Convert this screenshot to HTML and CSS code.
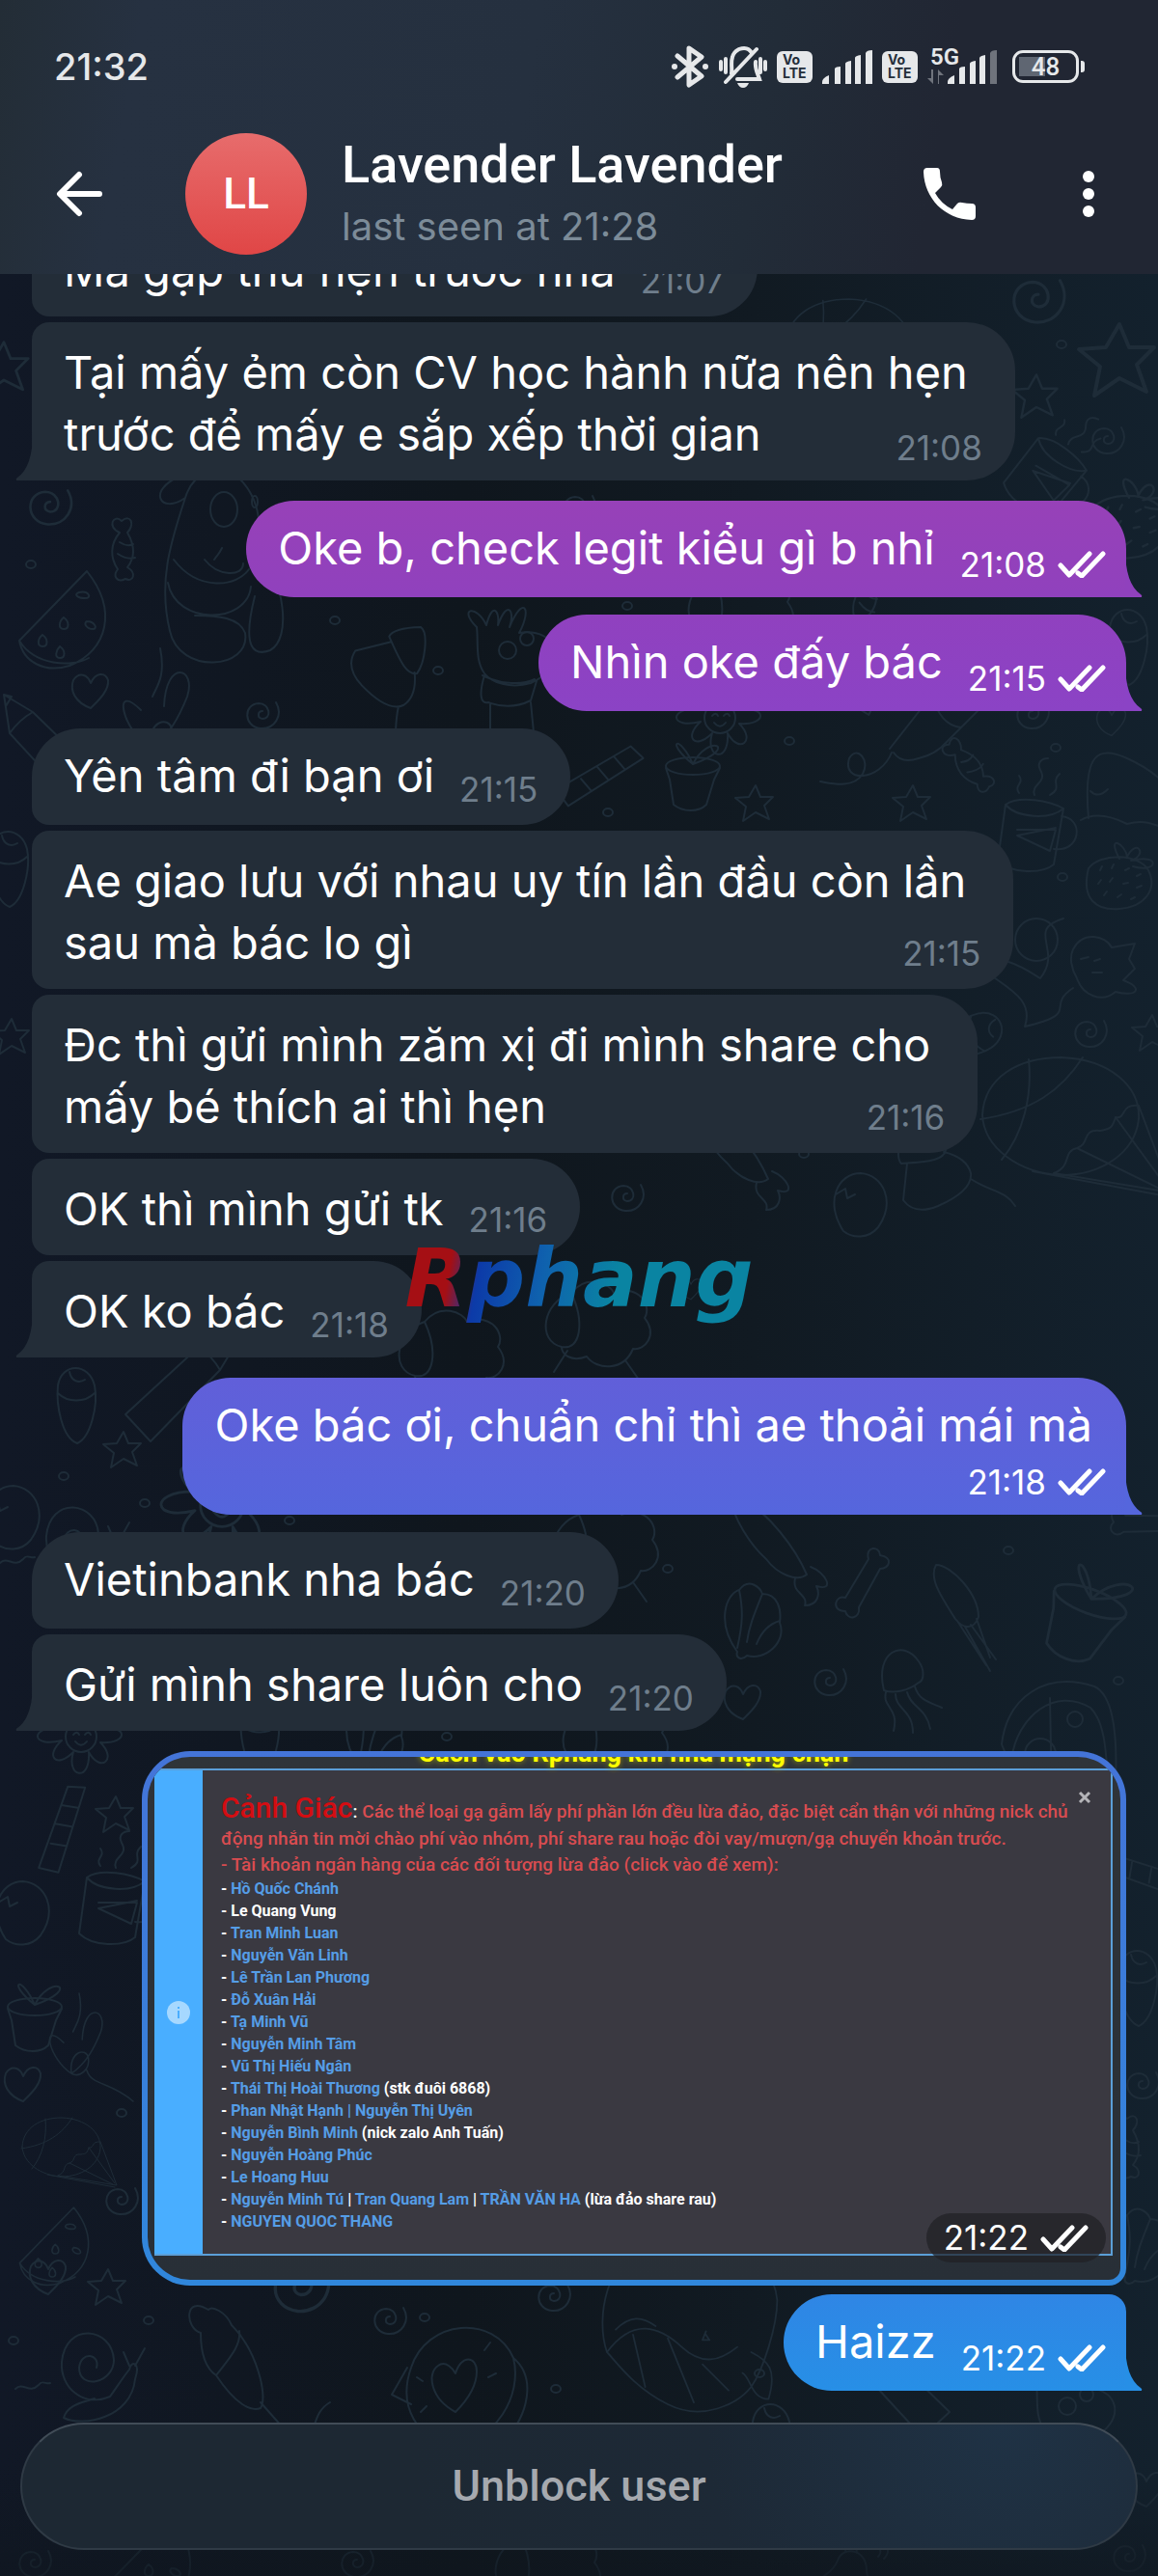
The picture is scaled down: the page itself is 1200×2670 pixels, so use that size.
FILE: index.html
```html
<!DOCTYPE html>
<html lang="vi">
<head>
    <meta charset="UTF-8">
    <meta name="viewport" content="width=device-width, initial-scale=1.0">
    <link rel="stylesheet" href="styles.css">
    <title>Lavender Lavender</title>
</head>
<body>

<!-- shared icons and wallpaper doodles -->
<svg class="defs" aria-hidden="true">
    <symbol id="checks" viewBox="0 0 50 28">
        <path d="M3 15l9 10L33 3M21 23l4 3L47 3" fill="none" stroke="currentColor" stroke-width="5" stroke-linecap="round" stroke-linejoin="round"/>
    </symbol>
    <symbol id="tail" viewBox="0 0 18 50">
        <path d="M0 0V50H17Q18 48 16 47Q0 36 0 0Z" fill="currentColor"/>
    </symbol>
    <g id="star"><path d="M0-18l5 12 13 0-9 9 5 14-14-7-13 9 3-15-11-9 14-1z"/></g>
    <g id="heart"><path d="M0 18C-16 12-22 0-18-11C-12-20-3-17 0-8C5-19 15-20 18-11C19 0 8 10 0 18z"/></g>
    <g id="swirl"><path d="M14-12C22 2 12 16-2 15C-20 13-20-10-4-11C8-11 10 5 0 5C-6 4-5-3 0-3"/></g>
    <g id="dot"><ellipse rx="5" ry="4"/></g>
    <g id="melon"><path d="M-42 32L28-40C60 0 50 42 10 58C-16 66-38 54-42 32C-26 58 12 60 30 50M-18 26c6 4 6 12 0 12s-5-8 0-12M4 8c6 4 6 12 0 12s-5-8 0-12M20-18c10-2 14 6 6 6s-12-4-6-6M28 12c8 0 12 8 6 8s-10-6-6-8M0 38c6 4 6 12 0 12s-4-8 0-12"/></g>
    <g id="candy"><path d="M-8-22c-14-6-6-20 2-12c10-8 14 4 6 12c8 14 8 26 0 36c10 6 6 16-2 12c-8 4-14-2-8-10c-8-12-8-26 2-38zM-8-12c6 4 10 4 14 2M-10 0c6 4 12 6 18 4"/></g>
    <g id="bear"><path d="M-34-88C-50-40-62 0-50 50C-40 96 34 90 28 52C22 36 0 34-24 34M-46-24C-20 10 20 4 32-14M-52 0C-44 44 30 44 34 4M38 14C24 70 38 76 54 70C76 58 70 0 40-40C46-60 42-90 20-110C0-126-26-114-34-88C-60-70-74-96-40-110M-14-24C0-6 26-6 26-20M4-36C0-28 0-30-4-24"/><ellipse cx="6" cy="-76" rx="14" ry="18"/><ellipse cx="38" cy="-84" rx="3" ry="6"/></g>
    <g id="llama"><path d="M-36-40c-20-20 0-24 10-2c6-24 14-16 12 0c10-28 18-14 12 2c14-34 24-20 10 6C50-40 60 0 20 18c-20 6-40 0-48-10c-10-14-6-32-8-48M-28 10c-6 20-4 30 4 28c16 6 32 4 44-2l6-20M-22 40v60M20 38l6 62M-30 10c20 10 42 10 54 4"/><circle cx="-4" cy="-16" r="9"/><circle cx="16" cy="-28" r="7"/></g>
    <g id="flower"><circle r="16"/><path d="M-8-2c2-3 5-3 6 0M4-2c2-3 5-3 6 0M-6 5c4 5 8 5 12 0M-10-14c-10-30 18-30 14-2c14-26 30-10 12 8c34-6 34 16 4 14c18 18 0 32-12 10c2 32-24 26-16 0c-18 18-30 4-12-12c-32 8-34-14-2-14c-18-18-4-28 12-4"/></g>
    <g id="pot"><ellipse cx="0" cy="0" rx="28" ry="9"/><path d="M-28 2l4 12 4 26c10 8 26 8 34 0l8-26 6-12M0-2C-14-34-30-26 0-2C16-34 50-20 0-2z"/></g>
    <g id="rocket"><path d="M-70 30L-26-26L34-78L62-50L4 8L-10 22Q-22 36-40 40Q-58 46-66 34M-26-26Q-18 6 4 8M-2-46Q6-14 24-10M16-62Q26-34 46-32M-68 34C-80 64-120 66-112 40C-104 26-90 42-98 56C-108 72-130 66-142 64"/></g>
    <g id="cup"><path d="M-30-24l-8 58c14 14 46 14 58 4l10-58M28-12c24 2 20 38-8 34M30-20c-14 12-48 10-60-4c14-10 46-4 60 4M-18 2l40 0-6 22-34-16 40-8M-16-36c-6-8 6-10 0-18M0-34c-4-12 14-12 6-26c-4-8 2-12 8-12M16-34c14-8 0-12 10-22"/></g>
    <g id="ghost"><path d="M-40 28C-46-40-30-48 0-34C40-16 70 20 60 42C40 46 30 26 0 34C-16 26-34 22-48 30M-38 0c6 6 12 4 18-2"/></g>
    <g id="berry"><path d="M-32-10C-20-26 20-26 30-8C40 12 26 30 0 32C-24 34-40 22-32-10M0-20C-14-46 6-36 8-22C18-42 30-24 12-18C44-26 40-4 14-12M-20-8l2-4M-8-10l2-4M6-8l4-2M18-2l4-2M-22 6l3-4M-10 4l3-4M4 6l5-1M18 10l5-2M-16 18l3-4M-2 20l4-3M12 22l4-2"/></g>
    <g id="cat"><path d="M-30-20C-20-40 4-34 10-22L34-26L28-10L34 0L22 12C44 20 36 30 14 24C0 36-20 28-26 10C-32 0-34-12-30-20M-22-10l8-2M-8-8l6-2M-10 4l10 0M-30 20C-60 40-20 46-80 60C-70 30-100 20-124 0C-110-20-80 0-64 10C-40-20-80-40-40-52"/><circle cx="-68" cy="-30" r="22"/></g>
    <g id="firework"><path d="M-30-12L40-2Q50 8 40 16L-32 6M-32-4C-50 6-66 4-64-10C-68-20-76-14-80-12M-86-10l-6-4M-86-18l-4-6M-78-20l0-6"/><ellipse cx="-32" cy="-3" rx="7" ry="10"/></g>
    <g id="bell"><path d="M-34 18C-32 4-18 6-12-10C-6-26 18-22 18 0C18 10 26 14 22 26C18 34-30 28-34 18zM-34 18C-26 10 16 16 22 24M-4-20c2-8 12-6 12 2M-44 22c-4-4-2-8 0-10M30-14c4-4 2-8 0-10M36-12c6-6 4-10 2-14"/><circle cx="-16" cy="22" r="6"/></g>
    <g id="balloon"><path d="M-82 10C-80-30-44-50 0-50C50-48 82-20 80 14C76 50 40 72 0 72C-44 70-80 44-82 10zM-84 14C-30 6 0-16 22-50M-34-48C-30-10-40 30-62 56M80 0C60-2 68 14 56 12C52 26 48 24 40 26C20 24 30 40 16 44C0 48 12 62-8 70M80 0L114 90L-8 70M56 12L110 86M16 44L106 88M-30 68L110 94"/></g>
    <g id="tree"><path d="M-16-44C-8-50 20-36 28-24C26-14 14-12-18-10C-24-16-20-32-16-44zM-12-10L-16 28Q-4 44 20 34Q56 18 54 0Q50-16 26-22M54 6C76 20 90 18 100 34"/></g>
    <g id="egg"><path d="M-14 30C-34 0-20-30 4-30C28-28 40 0 22 26C12 38-4 38-14 30M-22-8l10-6 2 10 8-4"/></g>
    <g id="brush"><path d="M-42-44c-8-18 4-22 12-2C-4-32 24 4 36 32C26 40 6 32-6 16C-24 0-40-28-42-44zM24 36c-4 16 14 16 10 28c14 0 16-12 12-20c20 6 10-14-6-20"/></g>
    <g id="sheep"><path d="M-20-30C-50-20-56 20-30 26C-10 30-6 0-20-30C-4-50 20-40 24-30C50-40 64-16 56-4C70 14 56 30 44 28C34 52 6 50-4 36C-20 42-30 34-30 26M-24 30l-14 22M36 40l14 20"/></g>
    <g id="rocketcandle"><path d="M-10-50l16-8 20 90-20 6zM-6-30l16-6M-2-10l16-6M4 10l16-6"/></g>
    <g id="bone"><path d="M-20 30c-16 0-10-18 0-14l24-40c-4-14 12-14 12-4c14 2 10 14 0 14l-22 40c2 12-12 14-14 4z"/></g>
    <g id="shell"><path d="M-18 30C-40 0-30-30-16-34C-6-48 6-36 8-30C24-30 28-14 26 0C34 20 10 40-8 34C-14 40-20 36-18 30zM-16-34c4 20 4 34-2 60M8-30c-8 20-14 34-16 50M26-2c-14 4-20 14-24 24"/></g>
    <g id="squid"><path d="M-30-50C-14-50 14-20 14 4C8 20-4 14-10 6C-24-16-38-36-30-50zM-8 8l30 46M0 14l26 46M6 12l26 36M12 6l14 40"/></g>
    <g id="jelly"><path d="M-20 10C-30-30 0-44 16-20C22-12 22 0 16 2C6 10-10 14-20 10zM-18 12c-4 16 14 16 8 40M-8 14c0 16 18 16 18 40M4 12c4 16 20 16 24 38M12 6c4 14 14 16 28 22"/></g>
    <g id="pizza"><path d="M-56 30C-50-20-10-46 40-30C62-20 66 30 60 100M-56 30C-52 40-50 44-46 46C-40 0 0-30 36-8C54 10 52 50 56 90M-46 46L44 60M-6-18L-4 80"/><circle cx="-16" cy="40" r="16"/><circle cx="20" cy="4" r="8"/></g>
    <g id="snail"><path d="M-40 50C-20 60 30 50 34 10C40-8 30-10 28 0C20 10 14 20 8 28C-20 40-44 18-42-8C-38-50 10-44 12-10C12 14-24 22-24-2C-22-20-2-16-6-2M34-4l10-18M28-4l-6-14M-40 50C-36 36-20 34-8 30M-90 20c8-8 14 6 24-4c4-6 8 0 12-2"/></g>
    <g id="cone"><path d="M-20-56c-26-16-24 20-8 24c0 30 10 40 16 44c20 30 36 38 46 34c8-12-4-60-30-86c-6-14-20-20-24-16M-12 12C0-4 14-18 12-34M34 40l44 50c14-20 10-40 28-50"/></g>
    <g id="donut"><path d="M-46-10C-30-60 40-66 60-20C70 20 40 66 0 70C-40 66-60 30-46-10zM60-20C84 0 76 40 50 66M-50-10l-16 28 20 10M0 36C-26 22-30-4-18-12C-10-18-2-8 0-4C6-24 22-22 22-6C22 10 10 26 0 36zM30-28l6-8M34 0l8-4M-34 4l-6-4M-30 30l-6 6"/></g>
    <g id="whale"><path d="M-90 20C-104-20-90-90-40-110C30-126 100-100 106-40C106-10 90 40 76 60C60 80 20 100-20 80C-60 60-80 30-90 20C-60-20-30-10-4 14C20 36 40 30 60 14M-60 0l14 60M-20 4l30 74M20 34l30 30M-80-6c16-16 30-16 46-4M24 0l4 6-8 0 4-10M76 20c20 10 30 20 20 54c-20 0-20-24-30-30"/></g>
    <g id="nut"><path d="M-20-20C-16-44 12-44 18-20C22 0 14 34 0 40C-16 34-22 0-20-20zM-20-12c10 10 28 10 38 0M-8-34c2 10 10 12 16 8"/></g>
    <g id="pencil"><path d="M-50-50l6 40 70 76 28-26-74-72zM-44-10q10-14 24-22M-50-50l8 2-6 10z"/></g>
    <g id="bird"><path d="M-30-16c-30-30-20 20 10 40C0 10 10-10 18-30C28-60-4-70-6-20M-20 24c-4-30 20-34 22-20c2 14-10 26-22 20zM0 20c6 20 30 14 60 40M-10-80c6 30-4 40-8 50"/></g>
</svg>

<header class="topbar">
    <div class="status">
        <span class="clock">21:32</span>
        <div class="status-icons">
            <svg width="40" height="44" viewBox="0 0 40 44" fill="none" stroke="currentColor" stroke-width="5" stroke-linejoin="round" stroke-linecap="round">
                <path d="M7 11L32 32L19 41V3L32 12L7 33"/>
                <circle cx="4" cy="22" r="3" fill="currentColor" stroke="none"/><circle cx="36" cy="22" r="3" fill="currentColor" stroke="none"/>
            </svg>
            <svg width="50" height="44" viewBox="0 0 50 44" fill="none" stroke="currentColor" stroke-width="4" stroke-linecap="round">
                <path d="M13 29C14 24 12 18 14 12C17 2 30 0 34 8M38 17C37 24 40 29 42 35H19M39 4L7 38M7 14V28M2 17V25M43 14V28M48 17V25"/>
                <path d="M19 39H31Q29 44 25 44Q21 44 19 39Z" fill="currentColor" stroke="none"/>
            </svg>
            <span class="volte">Vo<br>LTE</span>
            <svg width="52" height="36" viewBox="0 0 52 36" fill="currentColor">
                <path d="M0 34Q0 30 7 27V36H0zM13 20Q14 18 19 18V36H13zM24 15Q24 13 30 12V36H24zM34 9Q34 7 40 6V36H34zM45 4Q46 1 52 1V36H45z"/>
            </svg>
            <span class="volte">Vo<br>LTE</span>
            <span class="net">
                <b>5G</b>
                <svg width="72" height="36" viewBox="0 0 72 36" fill="currentColor">
                    <path opacity=".4" d="M4 21v9H0l6 6V21zM12 36v-9h5l-6-6v15zM65 4Q66 1 72 1V36H65z"/>
                    <path d="M21 34Q21 30 28 27V36H21zM33 20Q34 18 39 18V36H33zM44 15Q44 13 50 12V36H44zM54 9Q54 7 60 6V36H54z"/>
                </svg>
            </span>
            <span class="battery">48</span>
        </div>
    </div>
    <div class="contact">
        <button class="icon-btn back" aria-label="Back">
            <svg width="50" height="50" viewBox="0 0 50 50" fill="none" stroke="currentColor" stroke-width="6" stroke-linecap="round" stroke-linejoin="round">
                <path d="M45 25H5M24 5L4 25L24 45"/>
            </svg>
        </button>
        <div class="avatar">LL</div>
        <div class="who">
            <h1>Lavender Lavender</h1>
            <p>last seen at 21:28</p>
        </div>
        <button class="icon-btn call" aria-label="Call">
            <svg width="54" height="54" viewBox="0 0 54 54" fill="currentColor">
                <path d="M4 0H14Q17 0 17 4Q17 10 19 15Q20 18 18 20L12 26Q18 37 30 43L35 37Q37 35 40 36Q45 37 50 37Q54 37 54 41V50Q54 54 50 54C22 53 1 32 0 4Q0 0 4 0Z"/>
            </svg>
        </button>
        <button class="icon-btn" aria-label="More">
            <svg width="12" height="54" viewBox="0 0 12 54" fill="currentColor">
                <circle cx="6" cy="9" r="6"/><circle cx="6" cy="27" r="6"/><circle cx="6" cy="45" r="6"/>
            </svg>
        </button>
    </div>
</header>

<svg class="doodles" viewBox="0 0 1200 2670" preserveAspectRatio="xMidYMin slice" aria-hidden="true">
    <use href="#balloon" transform="translate(880 350) scale(.8)"/>
    <use href="#swirl" transform="translate(1076 310) scale(1.600)"/>
    <use href="#star" transform="translate(1160 372) scale(2)"/>
    <use href="#star" transform="translate(1074 410) scale(1.200)"/>
    <use href="#star" transform="translate(4 380) scale(1.400)"/>
    <use href="#dot" x="1100" y="357"/>
    <use href="#swirl" x="1148" y="455"/>
    <use href="#cup" transform="translate(1090 490) rotate(30)"/>
    <use href="#berry" transform="translate(1170 540) scale(1.200)"/>
    <use href="#candy" transform="translate(132 574)"/>
    <use href="#dot" x="32" y="585"/>
    <use href="#swirl" transform="translate(52 524) scale(1.300)"/>
    <use href="#melon" x="62" y="632"/>
    <use href="#bear" x="226" y="604"/>
    <use href="#heart" x="94" y="716"/>
    <use href="#swirl" x="272" y="740"/>
    <use href="#dot" x="347" y="643"/>
    <use href="#dot" x="454" y="695"/>
    <use href="#tree" transform="translate(400 680) rotate(70)"/>
    <use href="#llama" x="530" y="690"/>
    <use href="#bird" x="176" y="752"/>
    <use href="#pencil" transform="translate(54 770)"/>
    <use href="#sheep" transform="translate(760 628)"/>
    <use href="#dot" x="650" y="628"/>
    <use href="#candy" transform="translate(900 628) rotate(20)"/>
    <use href="#swirl" x="600" y="526"/>
    <use href="#nut" transform="translate(1170 670)"/>
    <use href="#flower" x="746" y="744"/>
    <use href="#pot" transform="translate(718 794)"/>
    <use href="#rocketcandle" transform="translate(610 800) rotate(70)"/>
    <use href="#rocketcandle" transform="translate(868 720) rotate(-48)"/>
    <use href="#rocket" x="992" y="746"/>
    <use href="#swirl" x="1070" y="740"/>
    <use href="#heart" transform="translate(1152 748) scale(.8)"/>
    <use href="#candy" transform="translate(1010 794) rotate(-40)"/>
    <use href="#dot" x="818" y="768"/>
    <use href="#dot" x="1094" y="775"/>
    <use href="#dot" x="630" y="842"/>
    <use href="#star" x="783" y="832"/>
    <use href="#star" x="946" y="832"/>
    <use href="#ghost" x="1168" y="820"/>
    <use href="#cup" x="1072" y="858"/>
    <use href="#dot" x="1101" y="909"/>
    <use href="#berry" x="1160" y="910"/>
    <use href="#cat" x="1142" y="1004"/>
    <use href="#nut" transform="translate(10 900)"/>
    <use href="#star" x="12" y="1074"/>
    <use href="#nut" transform="translate(1002 1076) rotate(70)"/>
    <use href="#swirl" x="1130" y="1070"/>
    <use href="#star" x="1194" y="1070"/>
    <use href="#star" x="904" y="1092"/>
    <use href="#firework" x="810" y="1108"/>
    <use href="#swirl" x="650" y="1240"/>
    <use href="#dot" x="960" y="1118"/>
    <use href="#swirl" x="790" y="1150"/>
    <use href="#bell" x="886" y="1152"/>
    <use href="#dot" x="987" y="1153"/>
    <use href="#balloon" x="1100" y="1146"/>
    <use href="#tree" x="952" y="1216"/>
    <use href="#dot" x="833" y="1196"/>
    <use href="#egg" x="888" y="1246"/>
    <use href="#brush" x="760" y="1190"/>
    <use href="#sheep" x="612" y="1370"/>
    <use href="#heart" transform="translate(716 1336) scale(.6)"/>
    <use href="#sheep" transform="translate(460 1400)"/>
    <use href="#nut" x="80" y="1456"/>
    <use href="#pencil" transform="translate(196 1440) rotate(90)"/>
    <use href="#star" x="128" y="1502"/>
    <use href="#dot" x="66" y="1530"/>
    <use href="#dot" x="150" y="1558"/>
    <use href="#egg" transform="translate(10 1570)"/>
    <use href="#snail" transform="translate(90 1600)"/>
    <use href="#flower" transform="translate(230 1560) scale(1.400)"/>
    <use href="#dot" x="300" y="1576"/>
    <use href="#sheep" transform="translate(620 1600)"/>
    <use href="#brush" x="800" y="1600"/>
    <use href="#whale" transform="translate(900 1500) scale(.6)"/>
    <use href="#bone" transform="translate(896 1640)"/>
    <use href="#bone" transform="translate(1190 1580) rotate(60)"/>
    <use href="#dot" x="692" y="1626"/>
    <use href="#dot" x="1045" y="1607"/>
    <use href="#shell" x="782" y="1682"/>
    <use href="#squid" x="1000" y="1672"/>
    <use href="#pot" transform="translate(1130 1660) rotate(20) scale(1.400)"/>
    <use href="#swirl" x="860" y="1742"/>
    <use href="#heart" x="770" y="1764"/>
    <use href="#jelly" x="936" y="1742"/>
    <use href="#dot" x="1159" y="1742"/>
    <use href="#pizza" x="1094" y="1778"/>
    <use href="#flower" x="84" y="1800"/>
    <use href="#nut" x="270" y="1800"/>
    <use href="#shell" transform="translate(390 1800)"/>
    <use href="#sheep" transform="translate(630 1800)"/>
    <use href="#dot" x="463" y="1800"/>
    <use href="#rocketcandle" transform="translate(54 1900) rotate(30)"/>
    <use href="#star" x="120" y="1880"/>
    <use href="#cup" transform="translate(120 1970)"/>
    <use href="#egg" x="20" y="1980"/>
    <use href="#pot" transform="translate(36 2080)"/>
    <use href="#bird" transform="translate(90 2130) scale(.8)"/>
    <use href="#heart" x="24" y="2160"/>
    <use href="#balloon" transform="translate(64 2220) scale(.5)"/>
    <use href="#dot" x="126" y="2190"/>
    <use href="#melon" transform="translate(54 2320) scale(.8)"/>
    <use href="#swirl" x="126" y="2280"/>
    <use href="#star" x="112" y="2370"/>
    <use href="#heart" transform="translate(50 2360)"/>
    <use href="#rocketcandle" transform="translate(1180 1950) rotate(-60)"/>
    <use href="#nut" transform="translate(1180 2060)"/>
    <use href="#swirl" x="1184" y="2160"/>
    <use href="#candy" transform="translate(1174 2230)"/>
    <use href="#shell" transform="translate(1184 2330)"/>
    <use href="#dot" x="154" y="2405"/>
    <use href="#dot" x="14" y="2426"/>
    <use href="#snail" x="106" y="2456"/>
    <use href="#cone" x="236" y="2450"/>
    <use href="#swirl" transform="translate(312 2370) scale(1.700)"/>
    <use href="#swirl" x="404" y="2404"/>
    <use href="#dot" x="440" y="2402"/>
    <use href="#donut" x="472" y="2464"/>
    <use href="#swirl" x="574" y="2380"/>
    <use href="#dot" x="576" y="2476"/>
    <use href="#whale" transform="translate(710 2420) scale(.9)"/>
    <use href="#dot" x="787" y="2460"/>
    <use href="#nut" transform="translate(800 2530)"/>
    <use href="#pencil" transform="translate(930 2460)"/>
    <use href="#llama" transform="translate(1110 2510)"/>
    <use href="#swirl" transform="translate(36 2656)"/>
    <use href="#melon" transform="translate(150 2650)"/>
    <use href="#swirl" transform="translate(370 2656)"/>
    <use href="#sheep" transform="translate(560 2660)"/>
    <use href="#bell" transform="translate(880 2664)"/>
    <use href="#swirl" transform="translate(1170 2650)"/>
    <use href="#heart" transform="translate(1188 2580)"/>
</svg>

<main class="chat">
    <div class="msg in next cut"><p>Mà gặp thứ hẹn trước nha</p><time>21:07</time></div>
    <div class="msg in next long tail"><p>Tại mấy ẻm còn CV học hành nữa nên hẹn<br>trước để mấy e sắp xếp thời gian</p><time>21:08</time><svg class="tip"><use href="#tail"/></svg></div>

    <div class="msg out tail purple"><p>Oke b, check legit kiểu gì b nhỉ</p><time>21:08<svg class="checks"><use href="#checks"/></svg></time><svg class="tip"><use href="#tail"/></svg></div>
    <div class="msg out tail violet"><p>Nhìn oke đấy bác</p><time>21:15<svg class="checks"><use href="#checks"/></svg></time><svg class="tip"><use href="#tail"/></svg></div>

    <div class="msg in first"><p>Yên tâm đi bạn ơi</p><time>21:15</time></div>
    <div class="msg in next long"><p>Ae giao lưu với nhau uy tín lần đầu còn lần<br>sau mà bác lo gì</p><time>21:15</time></div>
    <div class="msg in next long"><p>Đc thì gửi mình zăm xị đi mình share cho<br>mấy bé thích ai thì hẹn</p><time>21:16</time></div>
    <div class="msg in next"><p>OK thì mình gửi tk</p><time>21:16</time></div>
    <div class="msg in next tail"><p>OK ko bác</p><time>21:18</time><svg class="tip"><use href="#tail"/></svg></div>

    <div class="msg out tail stacked indigo"><p>Oke bác ơi, chuẩn chỉ thì ae thoải mái mà</p><time>21:18<svg class="checks"><use href="#checks"/></svg></time><svg class="tip"><use href="#tail"/></svg></div>

    <div class="msg in first"><p>Vietinbank nha bác</p><time>21:20</time></div>
    <div class="msg in next tail"><p>Gửi mình share luôn cho</p><time>21:20</time><svg class="tip"><use href="#tail"/></svg></div>

    <div class="photo">
        <div class="shot">
            <div class="shot-title">Cách vào Rphang khi nhà mạng chặn</div>
            <div class="notice">
                <div class="notice-side">
                    <svg width="24" height="24" viewBox="0 0 24 24"><circle cx="12" cy="12" r="12" fill="#a6d8ff"/><path d="M12 10v8M12 6v2" stroke="#4aaeff" stroke-width="2"/></svg>
                </div>
                <div class="notice-body">
                    <button class="close" aria-label="Close">
                        <svg width="14" height="14" viewBox="0 0 14 14"><path d="M2 2l10 10M12 2L2 12" stroke="#b4b4b8" stroke-width="3"/></svg>
                    </button>
                    <p class="warn"><strong>Cảnh Giác</strong><i>:</i> Các thể loại gạ gẫm lấy phí phần lớn đều lừa đảo, đặc biệt cẩn thận với những nick chủ<br>động nhắn tin mời chào phí vào nhóm, phí share rau hoặc đòi vay/mượn/gạ chuyển khoản trước.</p>
                    <p class="warn sub">- Tài khoản ngân hàng của các đối tượng lừa đảo (click vào để xem):</p>
                    <ul>
                        <li>- <a href="#">Hồ Quốc Chánh</a></li>
                        <li>- Le Quang Vung</li>
                        <li>- <a href="#">Tran Minh Luan</a></li>
                        <li>- <a href="#">Nguyễn Văn Linh</a></li>
                        <li>- <a href="#">Lê Trần Lan Phương</a></li>
                        <li>- <a href="#">Đỗ Xuân Hải</a></li>
                        <li>- <a href="#">Tạ Minh Vũ</a></li>
                        <li>- <a href="#">Nguyễn Minh Tâm</a></li>
                        <li>- <a href="#">Vũ Thị Hiếu Ngân</a></li>
                        <li>- <a href="#">Thái Thị Hoài Thương</a> (stk đuôi 6868)</li>
                        <li>- <a href="#">Phan Nhật Hạnh | Nguyễn Thị Uyên</a></li>
                        <li>- <a href="#">Nguyễn Bình Minh</a> (nick zalo Anh Tuấn)</li>
                        <li>- <a href="#">Nguyễn Hoàng Phúc</a></li>
                        <li>- <a href="#">Le Hoang Huu</a></li>
                        <li>- <a href="#">Nguyễn Minh Tú</a> | <a href="#">Tran Quang Lam</a> | <a href="#">TRẦN VĂN HA</a> (lừa đảo share rau)</li>
                        <li>- <a href="#">NGUYEN QUOC THANG</a></li>
                    </ul>
                </div>
            </div>
        </div>
        <time>21:22<svg class="checks"><use href="#checks"/></svg></time>
    </div>

    <div class="msg out tail blue"><p>Haizz</p><time>21:22<svg class="checks"><use href="#checks"/></svg></time><svg class="tip"><use href="#tail"/></svg></div>
</main>

<footer class="bottom">
    <button class="unblock">Unblock user</button>
</footer>

<div class="watermark">Rphang</div>

</body>
</html>
```
FILE: styles.css
```css
* {
    box-sizing: border-box;
}

body {
    position: relative;
    margin: 0;
    min-height: 100vh;
    display: flex;
    flex-direction: column;
    overflow-x: hidden;
    background: linear-gradient(90deg, #111826 0%, #0f161d 40%, #111a22 65%, #13212d 100%);
    color: #fff;
    font-family: Roboto, "Liberation Sans", sans-serif;
}

p, h1, ul {
    margin: 0;
    padding: 0;
}

button {
    border: 0;
    padding: 0;
    background: none;
    color: inherit;
    font: inherit;
}

.defs {
    position: absolute;
    width: 0;
    height: 0;
}

.doodles {
    position: absolute;
    z-index: -1;
    top: 0;
    left: 0;
    width: 100%;
    height: 100%;
    fill: none;
    stroke: #1e2c38;
    stroke-width: 2;
    stroke-linejoin: round;
    stroke-linecap: round;
}

/* header */
.topbar {
    position: relative;
    z-index: 1;
    height: 284px;
    background: linear-gradient(100deg, #232d36 0%, #263141 12%, #25303f 45%, #222c38 65%, #212633 80%);
}

.status {
    display: flex;
    align-items: center;
    justify-content: space-between;
    height: 138px;
    padding: 0 76px 0 56px;
    color: #e6e8ea;
}

.clock {
    font: 500 38px/44px Inter, sans-serif;
}

.status-icons {
    display: flex;
    align-items: center;
    gap: 10px;
}

.volte {
    width: 37px;
    height: 33px;
    padding: 2px 0 0 6px;
    border-radius: 6px;
    background: #e6e8ea;
    color: #242e3a;
    font: 700 14px/14px Inter, sans-serif;
}

.net {
    position: relative;
    display: flex;
}

.net b {
    position: absolute;
    left: 3px;
    top: -4px;
    font: 600 24px/24px Roboto, sans-serif;
}

.battery {
    position: relative;
    width: 69px;
    height: 34px;
    margin: 0 6px;
    border: 3px solid #e6e8ea;
    border-radius: 11px;
    background: linear-gradient(#5f6672, #5f6672) 4px 4px / 27px 20px no-repeat;
    text-align: center;
    font: 500 26px/28px Roboto, sans-serif;
}

.battery::after {
    content: "";
    position: absolute;
    right: -9px;
    top: 8px;
    width: 4px;
    height: 12px;
    border-radius: 0 3px 3px 0;
    background: #e6e8ea;
}

.contact {
    display: flex;
    align-items: center;
    height: 126px;
    padding: 0 66px 0 58px;
}

.icon-btn {
    display: flex;
}

.avatar {
    width: 126px;
    height: 126px;
    margin: 0 36px 0 84px;
    border-radius: 50%;
    background: linear-gradient(#e76c6c, #e04646);
    text-align: center;
    font: 500 44px/126px Roboto, sans-serif;
}

.who {
    flex: 1;
}

.who h1 {
    font: 500 54px/68px Roboto, sans-serif;
}

.who p {
    color: #7c8b98;
    font: 400 40px/60px Inter, sans-serif;
}

.call {
    margin-right: 111px;
}

/* messages */
.chat {
    flex: 1;
    display: flex;
    flex-direction: column;
    align-items: flex-start;
    overflow: hidden;
    padding: 0 33px;
}

.msg {
    position: relative;
    display: flex;
    gap: 26px;
    min-height: 100px;
    margin-top: 18px;
    padding: 17px 34px 15px 33px;
    border-radius: 50px;
    font: 400 47px/64px Inter, sans-serif;
}

.msg time {
    align-self: flex-end;
    font-size: 35px;
    line-height: 44px;
}

.in {
    background: #232d38;
}

.in time {
    color: #6f7e8c;
}

.in.first {
    border-bottom-left-radius: 18px;
}

.in.next {
    margin-top: 6px;
    padding-top: 20px;
    border-radius: 18px 50px 50px 18px;
}

.in.cut {
    margin-top: -56px;
}

.msg.tail {
    padding-bottom: 12px;
}

.in.tail {
    border-bottom-left-radius: 0;
}

.out {
    align-self: flex-end;
    margin-top: 18px;
    padding-right: 21px;
    border-bottom-right-radius: 0;
}

.in + .out {
    margin-top: 21px;
}

/* time shares the cell with the last text line */
.long {
    display: grid;
    min-height: 164px;
}

.long p,
.long time {
    grid-area: 1 / 1;
}

.long p {
    padding-right: 15px;
}

.long time {
    align-self: end;
    justify-self: end;
}

.stacked {
    flex-direction: column;
    gap: 0;
    min-height: 142px;
}

.stacked p {
    padding-right: 14px;
}

.stacked time {
    margin-top: auto;
}

.tip {
    position: absolute;
    bottom: 0;
    width: 18px;
    height: 50px;
}

.in .tip {
    left: -17px;
    color: #232d38;
    transform: scaleX(-1);
}

.out .tip {
    right: -17px;
}

time {
    display: flex;
    align-items: center;
    gap: 12px;
}

.checks {
    width: 50px;
    height: 28px;
}

.purple {
    background: linear-gradient(#9741b8, #9041bd);
}

.purple .tip {
    color: #9041bd;
}

.violet {
    background: linear-gradient(#9041bf, #8b43c5);
}

.violet .tip {
    color: #8b43c5;
}

.indigo {
    background: linear-gradient(#615fd9, #5566dd);
}

.indigo .tip {
    color: #5566dd;
}

.blue {
    margin-top: 9px;
    border-top-right-radius: 18px;
    background: linear-gradient(#2f86e5, #278fe6);
}

.blue .tip {
    color: #278fe6;
}

/* picture message */
.photo {
    position: relative;
    align-self: flex-end;
    width: 90%;
    max-width: 1020px;
    margin-top: 21px;
    padding: 6px;
    border-radius: 50px 50px 18px 50px;
    background: linear-gradient(#4474d8, #3087dc);
}

.shot {
    overflow: hidden;
    padding: 0 8px 25px 7px;
    border-radius: 44px 44px 12px 44px;
    background: linear-gradient(#2f3439, #282f37);
    font: 700 16px/23px Roboto, sans-serif;
}

.shot-title {
    display: flex;
    align-items: flex-end;
    justify-content: center;
    height: 12px;
    padding-bottom: 2px;
    color: #ff0;
    font-size: 27px;
    font-weight: 700;
    line-height: 28px;
    text-shadow: 0 0 6px #a0a000;
}

.notice {
    display: flex;
    border: 2px solid #5b9fd8;
    border-left: 0;
    background: #3a3941;
}

.notice-side {
    display: flex;
    align-items: center;
    justify-content: center;
    flex: 0 0 50px;
    background: #49aeff;
}

.notice-body {
    position: relative;
    flex: 1;
    padding: 22px 19px;
}

.close {
    position: absolute;
    top: 21px;
    right: 20px;
    display: flex;
}

.warn {
    color: #d94c50;
    font-size: 19px;
    font-weight: 500;
    line-height: 28px;
}

.warn strong {
    color: #d40d12;
    font-size: 30px;
    font-weight: 500;
    line-height: 34px;
}

.warn i {
    color: #fff;
    font-style: normal;
}

.warn.sub {
    line-height: 26px;
}

.notice ul {
    list-style: none;
}

.notice a {
    color: #559de6;
    text-decoration: none;
}

.photo time {
    position: absolute;
    right: 21px;
    bottom: 24px;
    height: 51px;
    padding: 0 18px;
    border-radius: 26px;
    background: rgba(32, 32, 36, .7);
    font: 400 35px/51px Inter, sans-serif;
}

/* footer */
.bottom {
    padding: 33px 21px 27px;
    background: linear-gradient(rgba(15, 22, 30, 0) 40%, rgba(15, 22, 30, .6));
}

.unblock {
    width: 100%;
    height: 132px;
    border: 2px solid #2f3a45;
    border-top-color: #414c57;
    border-radius: 66px;
    background: radial-gradient(circle at 88% 0, #1f3245 0, #1d2936 30%, #1d2833 60%);
    color: #a6a9af;
    font: 500 45px/60px Roboto, sans-serif;
}

.watermark {
    position: absolute;
    top: 50%;
    left: 50%;
    transform: translate(-50%, -50%);
    padding-bottom: 20px;
    background: linear-gradient(100deg, #a50f14 0 14%, #0c3aa8 22%, #0f62ae 40%, #0a84a2 60%);
    background-clip: text;
    -webkit-background-clip: text;
    color: transparent;
    font: italic 700 84px/100px "DejaVu Sans", sans-serif;
    pointer-events: none;
}
```
